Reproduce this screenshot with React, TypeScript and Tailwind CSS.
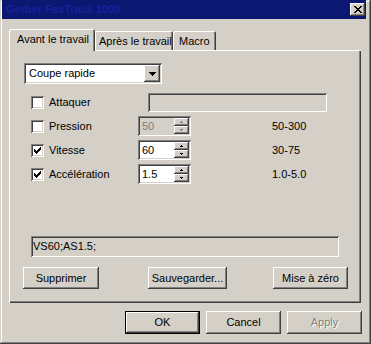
import React from "react";

const sunken =
  "shadow-[inset_1px_1px_#808080,inset_-1px_-1px_#ffffff,inset_2px_2px_#404040,inset_-2px_-2px_#d4d0c8]";
const raised =
  "shadow-[inset_-1px_-1px_#404040,inset_1px_1px_#ffffff,inset_-2px_-2px_#808080,inset_2px_2px_#d4d0c8]";

function Pixels({ rows, color, w, h }: { rows: string[]; color: string; w: number; h: number }) {
  const rects: React.ReactNode[] = [];
  rows.forEach((r, y) => {
    for (let x = 0; x < r.length; x++) {
      if (r[x] === "#") rects.push(<rect key={`${x}-${y}`} x={x} y={y} width={1} height={1} fill={color} />);
    }
  });
  return (
    <svg width={w} height={h} viewBox={`0 0 ${w} ${h}`} shapeRendering="crispEdges" className="block">
      {rects}
    </svg>
  );
}

function Check({ checked }: { checked?: boolean }) {
  return (
    <div className={`w-[13px] h-[13px] bg-white ${sunken} flex items-center justify-center shrink-0`}>
      {checked && (
        <Pixels
          w={7}
          h={7}
          color="#000000"
          rows={["......#", ".....##", "#...###", "##.###.", "#####..", ".###...", "..#...."]}
        />
      )}
    </div>
  );
}

function SpinArrows({ disabled }: { disabled?: boolean }) {
  const c = disabled ? "#808080" : "#000000";
  return (
    <div className="flex flex-col w-[15px] h-[16px] shrink-0">
      <div className={`h-[8px] bg-[#d4d0c8] ${raised} flex items-center justify-center`}>
        <Pixels w={3} h={2} color={c} rows={[".#.", "###"]} />
      </div>
      <div className={`h-[8px] bg-[#d4d0c8] ${raised} flex items-center justify-center`}>
        <Pixels w={3} h={2} color={c} rows={["###", ".#."]} />
      </div>
    </div>
  );
}

function Spin({ value, disabled }: { value: string; disabled?: boolean }) {
  return (
    <div
      className={`w-[53px] h-[20px] ${sunken} ${disabled ? "bg-[#d4d0c8] text-[#808080]" : "bg-white text-black"} flex items-center p-[2px] shrink-0`}
    >
      <span className="flex-1 pl-[2px] leading-[13px]">{value}</span>
      <SpinArrows disabled={disabled} />
    </div>
  );
}

function Btn({ label, w, def, disabled }: { label: string; w: string; def?: boolean; disabled?: boolean }) {
  return (
    <div className={`${w} ${def ? "h-[23px] border border-black" : "h-[23px]"} bg-[#d4d0c8] flex`}>
      <div
        className={`flex-1 ${raised} flex items-center justify-center ${disabled ? "text-[#808080] [text-shadow:1px_1px_0_#ffffff]" : "text-black"}`}
      >
        {label}
      </div>
    </div>
  );
}

function Btn22({ label, w }: { label: string; w: string }) {
  return (
    <div className={`${w} h-[22px] bg-[#d4d0c8] ${raised} flex items-center justify-center text-black shrink-0`}>
      {label}
    </div>
  );
}

const tabBorder = "shadow-[inset_1px_1px_#ffffff,inset_-1px_0_#404040,inset_-2px_0_#808080]";

export default function App() {
  return (
    <div
      className={`w-[371px] h-[344px] bg-[#d4d0c8] relative overflow-hidden font-[family-name:'Liberation_Sans',Arial,sans-serif] text-[11px] leading-[13px] text-black shadow-[inset_-1px_-1px_#404040,inset_1px_1px_#d4d0c8,inset_-2px_-2px_#808080,inset_2px_2px_#ffffff]`}
    >
      {/* Title bar */}
      <div className="ml-[2px] w-[364px] h-[19px] bg-[#0a1872] flex items-center justify-between pl-[4px] pr-[1px]">
        <span className="font-bold text-[#16229a] text-[11px]">Gerber FasTrack 1000</span>
        <div className={`w-[15px] h-[13px] bg-[#d4d0c8] ${raised} flex items-center justify-center`}>
          <Pixels
            w={8}
            h={7}
            color="#000000"
            rows={["##....##", ".##..##.", "..####..", "...##...", "..####..", ".##..##.", "##....##"]}
          />
        </div>
      </div>

      {/* Content */}
      <div className="pl-[9px] pt-[10px]">
        {/* Tabs */}
        <div className="flex items-end h-[21px]">
          <div
            className={`relative z-10 top-[1px] w-[86px] h-[22px] bg-[#d4d0c8] ${tabBorder} rounded-tl-[2px] rounded-tr-[2px] pl-[8px] pt-[4px]`}
          >
            Avant le travail
          </div>
          <div
            className={`w-[78px] h-[19px] bg-[#d4d0c8] ${tabBorder} rounded-tr-[2px] pl-[4px] pt-[4px]`}
          >
            Après le travail
          </div>
          <div
            className={`w-[43px] h-[19px] bg-[#d4d0c8] ${tabBorder} rounded-tl-[2px] rounded-tr-[2px] pl-[6px] pt-[4px]`}
          >
            Macro
          </div>
        </div>

        {/* Panel */}
        <div className="w-[352px] h-[253px] bg-[#d4d0c8] shadow-[inset_1px_1px_#ffffff,inset_-1px_-1px_#404040,inset_-2px_-2px_#808080] flex flex-col">
          {/* Dropdown */}
          <div className={`ml-[15px] mt-[13px] w-[138px] h-[21px] bg-white ${sunken} flex items-center p-[2px]`}>
            <span className="flex-1 pl-[3px]">Coupe rapide</span>
            <div className={`w-[16px] h-[17px] bg-[#d4d0c8] ${raised} flex items-center justify-center`}>
              <Pixels w={7} h={4} color="#000000" rows={["#######", ".#####.", "..###..", "...#..."]} />
            </div>
          </div>

          {/* Rows */}
          <div className="mt-[8px] ml-[22px] flex flex-col gap-[4px]">
            <div className="flex items-center h-[20px]">
              <div className="flex items-center w-[117px]">
                <Check />
                <span className="ml-[5px]">Attaquer</span>
              </div>
              <div className={`w-[179px] h-[19px] bg-[#d4d0c8] ${sunken}`} />
            </div>
            <div className="flex items-center h-[20px]">
              <div className="flex items-center w-[107px]">
                <Check />
                <span className="ml-[5px]">Pression</span>
              </div>
              <Spin value="50" disabled />
              <span className="ml-[81px]">50-300</span>
            </div>
            <div className="flex items-center h-[20px]">
              <div className="flex items-center w-[107px]">
                <Check checked />
                <span className="ml-[5px]">Vitesse</span>
              </div>
              <Spin value="60" />
              <span className="ml-[81px]">30-75</span>
            </div>
            <div className="flex items-center h-[20px]">
              <div className="flex items-center w-[107px]">
                <Check checked />
                <span className="ml-[5px]">Accélération</span>
              </div>
              <Spin value="1.5" />
              <span className="ml-[81px]">1.0-5.0</span>
            </div>
          </div>

          {/* Command field */}
          <div className={`mt-[52px] ml-[22px] w-[308px] h-[21px] bg-[#d4d0c8] ${sunken} flex items-center pl-[2px]`}>
            VS60;AS1.5;
          </div>

          {/* Buttons */}
          <div className="mt-[10px] flex">
            <div className="ml-[14px]">
              <Btn22 label="Supprimer" w="w-[76px]" />
            </div>
            <div className="ml-[49px]">
              <Btn22 label="Sauvegarder..." w="w-[79px]" />
            </div>
            <div className="ml-[46px]">
              <Btn22 label="Mise à zéro" w="w-[75px]" />
            </div>
          </div>
        </div>

        {/* Bottom buttons */}
        <div className="mt-[8px] flex justify-end pr-[9px] gap-[6px]">
          <Btn label="OK" w="w-[75px]" def />
          <Btn label="Cancel" w="w-[75px]" />
          <Btn label="Apply" w="w-[75px]" disabled />
        </div>
      </div>
    </div>
  );
}
